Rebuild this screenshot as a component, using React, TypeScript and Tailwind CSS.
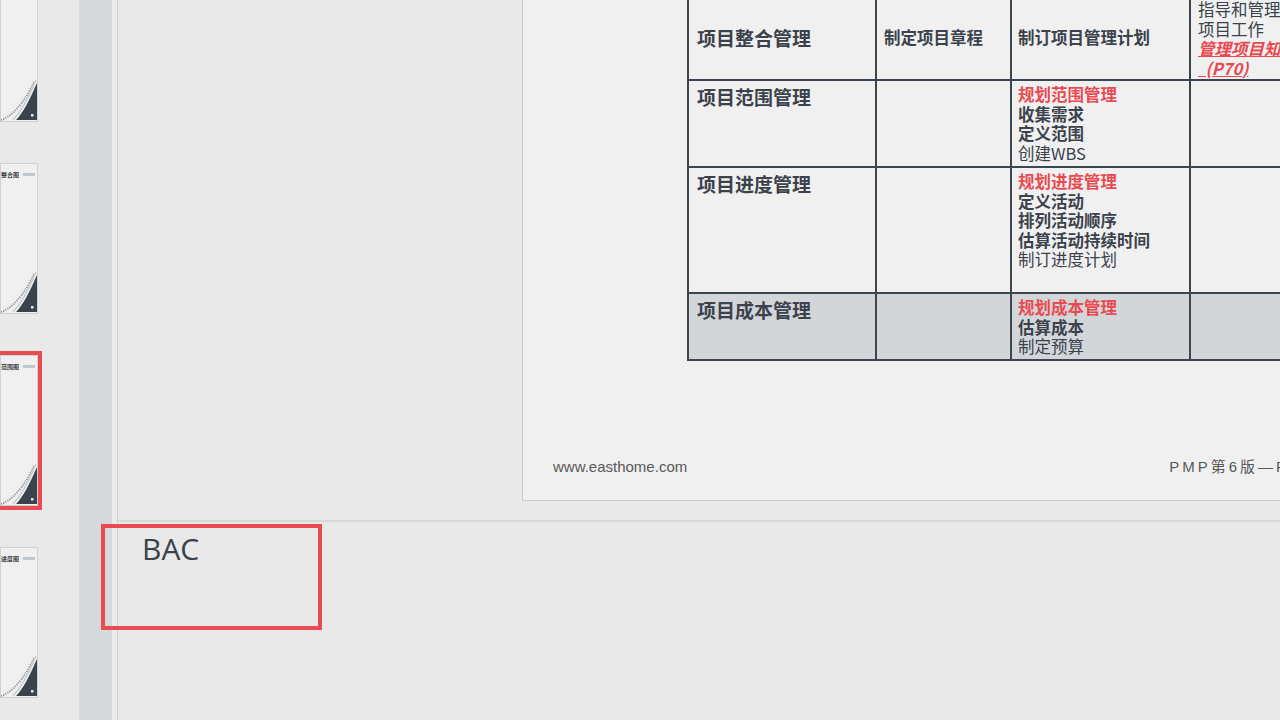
import React from "react";

const cjk = "font-['Microsoft_YaHei','Noto_Sans_CJK_SC',sans-serif]";

function Thumb({ selected, label }: { selected?: boolean; label?: string }) {
  return (
    <div
      className={`flex h-[151px] w-[38px] shrink-0 flex-col border border-[#cfd2d5] bg-[#f0f0f0] ${
        selected ? "outline-4 outline-[#e84b50]" : ""
      }`}
    >
      {label && (
        <div className={`mt-[7px] flex items-center gap-[4px] whitespace-nowrap text-[6px] leading-[7px] ${cjk}`}>
          <span className="font-bold text-[#3b424c]">{label}</span>
          <span className="h-[3px] w-[12px] bg-[#c3c7cb]" />
        </div>
      )}
      <svg className="mt-auto" width="36" height="42" viewBox="0 0 36 42">
        <path d="M0 41 C 10 38, 22 26, 33 3" fill="none" stroke="#8f959d" strokeWidth="2" strokeDasharray="1.2 1.2" />
        <path d="M12 41 C 20 33, 27 20, 35 1" fill="none" stroke="#c8cbcf" strokeWidth="1.5" />
        <path d="M15 41 C 22 34, 28 22, 36 4 L36 41 Z" fill="#3b424c" />
        <rect x="30" y="35" width="2.5" height="2.5" fill="#e9e9e9" />
      </svg>
    </div>
  );
}

const cell = "border-r-2 border-b-2 border-[#3d4550]";
const head = "text-[19px] leading-[24px] font-bold text-[#3b424c]";
const line = "text-[16.5px] leading-[19.5px] text-[#3b424c] whitespace-nowrap";

function Lines({ items }: { items: { t: string; k: "red" | "b" | "n" }[] }) {
  return (
    <>
      {items.map((it, i) => (
        <div
          key={i}
          className={`${line} ${
            it.k === "red" ? "font-bold text-[#e84a50]" : it.k === "b" ? "font-bold" : "font-normal"
          }`}
        >
          {it.t}
        </div>
      ))}
    </>
  );
}

function Slide() {
  return (
    <div className={`flex h-[501px] w-[900px] shrink-0 flex-col border-b border-l border-[#cbcbcb] bg-[#f0f0f0] ${cjk}`}>
      <div className="ml-[164px] grid w-[683px] grid-cols-[188px_135px_179px_179px] grid-rows-[81px_87px_126px_67px] border-l-2 border-[#3d4550]">
        {/* row 1 */}
        <div className={`${cell} flex items-center pb-[3px] pl-[8px]`}>
          <span className={head}>项目整合管理</span>
        </div>
        <div className={`${cell} flex items-center pb-[3px] pl-[7px]`}>
          <span className={`${line} font-bold`}>制定项目章程</span>
        </div>
        <div className={`${cell} flex items-center pb-[3px] pl-[6px]`}>
          <span className={`${line} font-bold`}>制订项目管理计划</span>
        </div>
        <div className={`${cell} pl-[7px]`}>
          <div className={line}>指导和管理</div>
          <div className={line}>项目工作</div>
          <div className={`${line} font-bold italic text-[#e84a50] underline`}>管理项目知识</div>
          <div className={`${line} font-bold italic text-[#e84a50] underline`}>{"\u00a0\u00a0(P70)"}</div>
        </div>

        {/* row 2 */}
        <div className={`${cell} pl-[8px] pt-[4px]`}>
          <div className={head}>项目范围管理</div>
        </div>
        <div className={cell} />
        <div className={`${cell} pl-[6px] pt-[4px]`}>
          <Lines
            items={[
              { t: "规划范围管理", k: "red" },
              { t: "收集需求", k: "b" },
              { t: "定义范围", k: "b" },
              { t: "创建WBS", k: "n" },
            ]}
          />
        </div>
        <div className={cell} />

        {/* row 3 */}
        <div className={`${cell} pl-[8px] pt-[4px]`}>
          <div className={head}>项目进度管理</div>
        </div>
        <div className={cell} />
        <div className={`${cell} pl-[6px] pt-[4px]`}>
          <Lines
            items={[
              { t: "规划进度管理", k: "red" },
              { t: "定义活动", k: "b" },
              { t: "排列活动顺序", k: "b" },
              { t: "估算活动持续时间", k: "b" },
              { t: "制订进度计划", k: "n" },
            ]}
          />
        </div>
        <div className={cell} />

        {/* row 4 */}
        <div className={`${cell} bg-[#d3d6d9] pl-[8px] pt-[4px]`}>
          <div className={head}>项目成本管理</div>
        </div>
        <div className={`${cell} bg-[#d3d6d9]`} />
        <div className={`${cell} bg-[#d3d6d9] pl-[6px] pt-[4px]`}>
          <Lines
            items={[
              { t: "规划成本管理", k: "red" },
              { t: "估算成本", k: "b" },
              { t: "制定预算", k: "n" },
            ]}
          />
        </div>
        <div className={`${cell} bg-[#d3d6d9]`} />
      </div>

      <div className="mt-auto flex items-center gap-[482px] pb-[23px] pl-[30px] font-['Liberation_Sans','Noto_Sans_CJK_SC',sans-serif] text-[15px] leading-[20px] text-[#595959]">
        <span>www.easthome.com</span>
        <span className="whitespace-nowrap tracking-[3px]">PMP第6版—PMBOK指南</span>
      </div>
    </div>
  );
}

export default function App() {
  return (
    <div className="relative flex h-[720px] w-[1280px] overflow-hidden bg-[#e9e9e9]">
      <aside className="-mt-[29px] flex w-[79px] shrink-0 flex-col gap-[41px]">
        <Thumb />
        <Thumb label="整合图" />
        <Thumb label="范围图" selected />
        <Thumb label="进度图" />
      </aside>
      <div className="w-[33px] shrink-0 bg-[#d6d9db]" />
      <div className="w-[5px] shrink-0 bg-[#ebebeb]" />
      <div className="w-px shrink-0 bg-[#cfd2d5]" />

      <main className="flex min-w-0 flex-1 flex-col">
        <section className="flex h-[520px] shrink-0 items-end overflow-hidden pb-[19px] pl-[404px]">
          <Slide />
        </section>
        <div className="h-[2px] shrink-0 bg-[#d6d9db]" />
        <div className="pl-[24px] pt-[7px] font-['Open_Sans',sans-serif] text-[30px] leading-[40px] text-[#3b424c]">
          BAC
        </div>
      </main>

      <div className="pointer-events-none absolute left-[101px] top-[524px] h-[106px] w-[221px] border-4 border-[#e84b50]" />
    </div>
  );
}
